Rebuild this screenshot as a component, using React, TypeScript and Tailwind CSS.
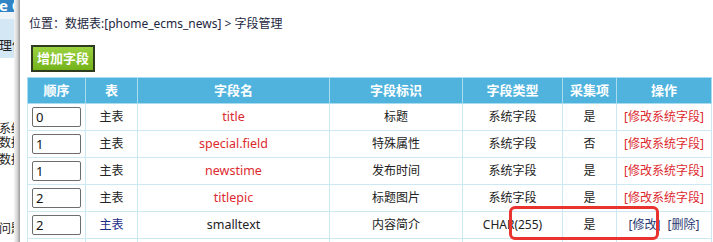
import React from "react";

const F = { fontFamily: '"Noto Sans", "Noto Sans CJK SC", sans-serif' } as React.CSSProperties;

type Row = {
  order: string;
  tableBlue: boolean;
  name: string;
  nameRed: boolean;
  label: string;
  type: string;
  collect: string;
  sys: boolean;
};

const rows: Row[] = [
  { order: "0", tableBlue: false, name: "title", nameRed: true, label: "标题", type: "系统字段", collect: "是", sys: true },
  { order: "1", tableBlue: false, name: "special.field", nameRed: true, label: "特殊属性", type: "系统字段", collect: "否", sys: true },
  { order: "1", tableBlue: false, name: "newstime", nameRed: true, label: "发布时间", type: "系统字段", collect: "是", sys: true },
  { order: "2", tableBlue: false, name: "titlepic", nameRed: true, label: "标题图片", type: "系统字段", collect: "是", sys: true },
  { order: "2", tableBlue: true, name: "smalltext", nameRed: false, label: "内容简介", type: "CHAR(255)", collect: "是", sys: false },
  { order: "3", tableBlue: true, name: "writer", nameRed: false, label: "作者", type: "VARCHAR(30)", collect: "是", sys: false },
];

export default function App() {
  return (
    <div className="relative w-[713px] h-[242px] overflow-hidden bg-white text-[#222]" style={F}>
      <div className="flex h-full">
        {/* sidebar */}
        <div className="relative w-[20px] shrink-0 h-full overflow-hidden">
          <div className="w-[17px] h-full overflow-hidden flex flex-col">
            <div className="h-[12px] bg-[#2f84c6] text-white font-bold text-[15px] leading-[11px] whitespace-nowrap overflow-hidden">
              <span className="block ml-[-1px]">e C</span>
            </div>
            <div className="h-[7px] bg-[#eef4f8]"></div>
            <div className="h-[39px] bg-[#d3e8f4] text-[13px] whitespace-nowrap pt-[18px] leading-[16px]">
              <span className="block ml-[-1px]">理信</span>
            </div>
            <div className="text-[12px] whitespace-nowrap leading-[14px] pt-[64px]">
              <div className="ml-[-1px]">系统</div>
              <div className="ml-[-1px]">数据</div>
              <div className="ml-[-1px] mt-[3px]">数据</div>
              <div className="ml-[-1px] mt-[55px]">问题</div>
            </div>
          </div>
          <div className="absolute top-0 right-0 w-[6px] h-full bg-gradient-to-r from-[#f4f4f4] via-[#d9d9d9] to-[#9a9a9a]"></div>
        </div>

        {/* content */}
        <div className="flex-1 pl-[7px] pt-[15px]">
          <div className="pl-[2px] text-[12px] leading-[17px] text-[#1d2740] whitespace-nowrap">
            位置：数据表:[phome_ecms_news] &gt; 字段管理
          </div>
          <div className="pl-[4px] mt-[13px]">
            <div className="w-[64px] h-[27px] border-2 border-[#2e3b1e] bg-gradient-to-b from-[#9bd23f] to-[#74b219] flex items-center justify-center text-white font-bold text-[13px]">
              增加字段
            </div>
          </div>
          <table className="mt-[5px] border-collapse table-fixed w-[684px] text-[12px]">
            <colgroup>
              <col className="w-[58px]" />
              <col className="w-[52px]" />
              <col className="w-[192px]" />
              <col className="w-[133px]" />
              <col className="w-[100px]" />
              <col className="w-[54px]" />
              <col className="w-[95px]" />
            </colgroup>
            <thead>
              <tr className="h-[26px] bg-[#4fb3de] text-white font-bold">
                {["顺序", "表", "字段名", "字段标识", "字段类型", "采集项", "操作"].map((h) => (
                  <th key={h} className="border border-[#a9dcef] font-bold text-center p-0 text-[13px]">{h}</th>
                ))}
              </tr>
            </thead>
            <tbody>
              {rows.map((r, i) => (
                <tr key={i} className="h-[27px] bg-white">
                  <td className="border border-[#cbe8f3] pl-[4px] pr-0 py-0">
                    <div className="w-[49px] h-[20px] border border-[#6d6d6d] rounded-[2px] text-[13px] leading-[18px] pl-[3px] text-[#111]">
                      {r.order}
                    </div>
                  </td>
                  <td className={`border border-[#cbe8f3] text-center ${r.tableBlue ? "text-[#1b2c86]" : "text-[#222]"}`}>主表</td>
                  <td className={`border border-[#cbe8f3] text-center text-[12.5px] ${r.nameRed ? "text-[#dc2a2f]" : "text-[#222]"}`}>{r.name}</td>
                  <td className="border border-[#cbe8f3] text-center">{r.label}</td>
                  <td className="border border-[#cbe8f3] text-center">{r.type}</td>
                  <td className="border border-[#cbe8f3] text-center">{r.collect}</td>
                  <td className="border border-[#cbe8f3] text-center whitespace-nowrap">
                    {r.sys ? (
                      <span className="text-[#dc2a2f]">[修改系统字段]</span>
                    ) : (
                      <span className="text-[#2c3a72]">
                        [修改]<span className="inline-block w-[7px]"></span>[删除]
                      </span>
                    )}
                  </td>
                </tr>
              ))}
            </tbody>
          </table>
        </div>
      </div>

      {/* red annotation box */}
      <div className="absolute left-[509px] top-[206px] w-[150px] h-[34px] border-[3px] border-[#e8332f] rounded-[6px]"></div>
    </div>
  );
}
